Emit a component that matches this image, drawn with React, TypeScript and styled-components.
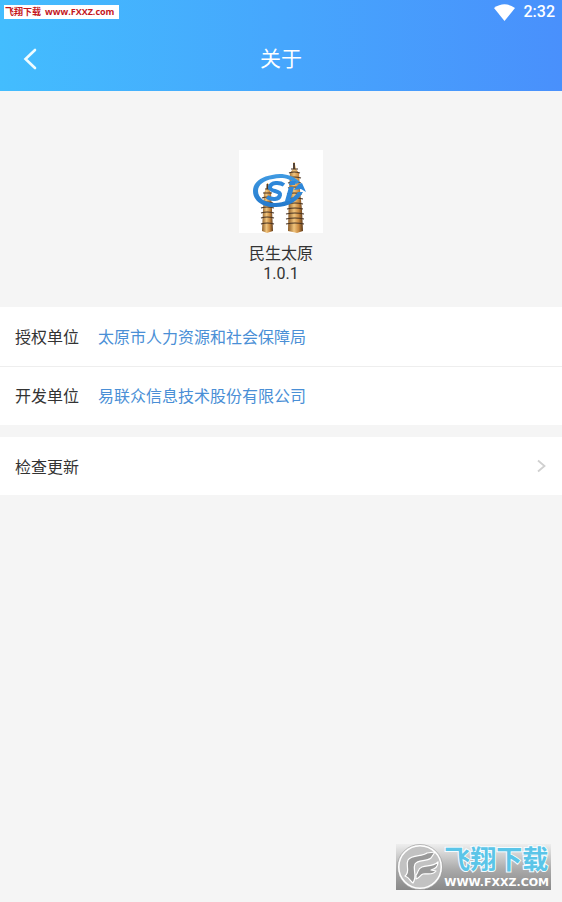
import React from 'react';
import styled, { createGlobalStyle } from 'styled-components';

const GlobalStyle = createGlobalStyle`
  *, *::before, *::after { box-sizing: border-box; }
  body {
    margin: 0;
    background: #f5f5f5;
    color: #333;
    font-family: Roboto, "Noto Sans CJK SC", sans-serif;
    font-size: 16px;
  }
`;

const Page = styled.div`
  display: flex;
  flex-direction: column;
  min-height: 100vh;
`;

const Header = styled.header`
  background: linear-gradient(90deg, #43bdfe, #4990fc);
  color: #fff;
`;

const StatusBar = styled.div`
  display: flex;
  justify-content: space-between;
  align-items: center;
  height: 24px;
  padding: 0 7px 0 4px;
`;

const SourceTag = styled.span`
  display: flex;
  align-items: center;
  gap: 4px;
  height: 14px;
  padding: 0 5px 0 1px;
  background: #fff;
  color: #c4161c;
  font: 700 9px/14px "Noto Sans CJK SC", sans-serif;
  white-space: nowrap;
`;

const SourceSite = styled.span`
  font: 700 9px/14px "Open Sans", sans-serif;
`;

const StatusIcons = styled.div`
  display: flex;
  align-items: center;
  gap: 9px;
  font-size: 16px;
  font-weight: 500;
  line-height: 24px;
`;

const NavBar = styled.div`
  display: grid;
  grid-template-columns: 60px 1fr 60px;
  align-items: center;
  height: 67px;
  padding-top: 2px;
`;

const BackButton = styled.button`
  display: flex;
  align-items: center;
  height: 44px;
  padding: 0 0 0 23px;
  border: 0;
  background: none;
  color: inherit;
  cursor: pointer;
`;

const Title = styled.h1`
  margin: 0;
  font-size: 21px;
  font-weight: 400;
  line-height: 30px;
  text-align: center;
`;

const Identity = styled.section`
  display: flex;
  flex-direction: column;
  align-items: center;
  padding: 59px 0 24px;
`;

const AppName = styled.h2`
  margin: 11px 0 0;
  font-size: 16px;
  font-weight: 400;
  line-height: 20px;
`;

const Version = styled.p`
  margin: 0;
  font-size: 16px;
  line-height: 19px;
`;

const Details = styled.dl`
  margin: 0 0 12px;
  background: #fff;
`;

const DetailRow = styled.div`
  display: flex;
  align-items: center;
  gap: 19px;
  height: 59px;
  padding: 0 15px 2px;

  & + & { border-top: 1px solid #eee; }
`;

const Label = styled.dt`
  color: #333;
`;

const Value = styled.dd`
  margin: 0;
  color: #4a8fd6;
`;

const ActionRow = styled.button`
  display: flex;
  justify-content: space-between;
  align-items: center;
  width: 100%;
  height: 58px;
  padding: 0 16px 0 15px;
  border: 0;
  background: #fff;
  color: #333;
  font: inherit;
  cursor: pointer;
`;

const Footer = styled.footer`
  display: flex;
  justify-content: flex-end;
  margin-top: auto;
  padding: 0 11px 12px;
`;

const Watermark = styled.div`
  display: flex;
  align-items: center;
  height: 46px;
  background: linear-gradient(#eee, #aaa 55%, #898989);
`;

const WatermarkText = styled.div`
  display: flex;
  flex-direction: column;
  padding-right: 2px;
  white-space: nowrap;
`;

const WatermarkName = styled.span`
  color: #5bc5e8;
  font: 700 26px/31px "Liberation Sans", "Noto Sans CJK SC", sans-serif;
  -webkit-text-stroke: 2px #f4fcff;
  paint-order: stroke fill;
`;

const WatermarkSite = styled.span`
  color: #fff;
  font: 700 11px/13px "DejaVu Sans", sans-serif;
`;

const WifiIcon = () => (
  <svg width="21" height="17" viewBox="0 0 21 17" aria-hidden="true">
    <path d="M0 4Q10.500-3.500 21 4L10.500 17Z" fill="#fff" />
  </svg>
);

const BackIcon = () => (
  <svg width="14" height="22" viewBox="0 0 14 22" aria-hidden="true">
    <path d="M12 2L2.500 11L12 20" fill="none" stroke="#effcff" strokeWidth="2.600" strokeLinecap="round" />
  </svg>
);

const ForwardIcon = () => (
  <svg width="9" height="14" viewBox="0 0 9 14" aria-hidden="true">
    <path d="M1 1.500L7.500 7L1 12.500" fill="none" stroke="#d0d0d0" strokeWidth="1.800" />
  </svg>
);

const LogoIcon = () => (
  <svg width="84" height="83" viewBox="0 0 84 83" role="img" aria-label="民生太原">
    <defs>
      <linearGradient id="stone">
        <stop offset="0" stopColor="#8a5a26" />
        <stop offset="0.4" stopColor="#f0c47c" />
        <stop offset="0.7" stopColor="#cb8c42" />
        <stop offset="1" stopColor="#5a3718" />
      </linearGradient>
      <linearGradient id="ring" x2="0" y2="1">
        <stop offset="0" stopColor="#3f9ae2" />
        <stop offset="1" stopColor="#2479cc" />
      </linearGradient>
    </defs>
    <rect width="84" height="83" fill="#fff" />
    <path d="M54.500 12H55.500L57 19L60 23L61 40L63 60L64 81L58 83L49 81L50 40L51 23L54 19Z" fill="url(#stone)" />
    <path d="M28 33H29L30 39L32 43L33 60L34 81L28 83L23 81L24 60L25 43L27 39Z" fill="url(#stone)" />
    <g stroke="#4a3524" strokeWidth="1.200" fill="none">
      <path d="M52 19H59M50 23Q55 21 61 23M49 28Q55 26 62 28M49 33Q55 31 62 33M49 38Q55 36 63 38M48 44Q55 42 63 44M48 49Q56 47 64 49M48 54Q56 52 64 54M48 59Q56 57 64 59M47 64Q56 62 65 64M47 69Q56 67 65 69M47 74Q56 72 65 74" />
      <path d="M26 39H31M24 43H33M23 48Q28 46 34 48M22 53Q28 51 34 53M22 58Q28 56 35 58M22 63Q28 61 35 63M22 68Q28 66 35 68M22 74Q28 72 35 74" />
    </g>
    <path d="M55 13V19M28.500 34V39" stroke="#45362d" strokeWidth="1.800" />
    <path d="M61 32C52 24 42 23 33 25C21 27 14 33 14 41C14 51 24 58 37 57C49 57 59 51 64 42L59 42C54 49 45 53 36 53C26 53 19 48 19 41C19 35 25 30 34 29C42 27 51 28 57 34Z" fill="url(#ring)" />
    <path d="M45 35C41 32 32 32 31 37C30 42 42 40 41 45C40 50 33 50 28 47" fill="none" stroke="#2e87d9" strokeWidth="4" />
    <path d="M50 37H55L51 51H46ZM51 31H57L56 35H50Z" fill="#2e87d9" />
    <path d="M60 34L63 33L67 42L62 39L55 40L58 36Z" fill="#2e87d9" />
  </svg>
);

const WatermarkIcon = () => (
  <svg width="48" height="46" viewBox="0 0 48 46" aria-hidden="true">
    <circle cx="24" cy="23" r="21.500" fill="#c2c2c2" stroke="#fff" strokeWidth="2" />
    <circle cx="24" cy="23" r="22.500" fill="none" stroke="#8c8c8c" strokeWidth="0.600" />
    <g fill="#999" stroke="#fff" strokeWidth="1.200" strokeLinejoin="round">
      <path d="M9 32C15 27 9 22 12 16C16 10 26 13 31 9L39 8L35 14C30 18 22 15 19 20C16 26 22 31 17 39C14 37 14 34 9 32Z" />
      <path d="M20 31C23 28 21 25 26 23C31 21 36 23 42 18C42 23 39 25 35 26L40 27C36 32 31 29 27 30C24 31 24 34 20 35Z" />
    </g>
  </svg>
);

const details = [
  { label: '授权单位', value: '太原市人力资源和社会保障局' },
  { label: '开发单位', value: '易联众信息技术股份有限公司' },
];

export default function App() {
  return (
    <>
      <GlobalStyle />
      <Page>
        <Header>
          <StatusBar>
            <SourceTag><span>飞翔下载</span><SourceSite>www.FXXZ.com</SourceSite></SourceTag>
            <StatusIcons><WifiIcon /><time>2:32</time></StatusIcons>
          </StatusBar>
          <NavBar>
            <BackButton type="button" aria-label="返回"><BackIcon /></BackButton>
            <Title>关于</Title>
          </NavBar>
        </Header>
        <main>
          <Identity>
            <LogoIcon />
            <AppName>民生太原</AppName>
            <Version>1.0.1</Version>
          </Identity>
          <Details>
            {details.map(({ label, value }) => (
              <DetailRow key={label}>
                <Label>{label}</Label>
                <Value>{value}</Value>
              </DetailRow>
            ))}
          </Details>
          <ActionRow type="button"><span>检查更新</span><ForwardIcon /></ActionRow>
        </main>
        <Footer>
          <Watermark>
            <WatermarkIcon />
            <WatermarkText>
              <WatermarkName>飞翔下载</WatermarkName>
              <WatermarkSite>WWW.FXXZ.COM</WatermarkSite>
            </WatermarkText>
          </Watermark>
        </Footer>
      </Page>
    </>
  );
}
